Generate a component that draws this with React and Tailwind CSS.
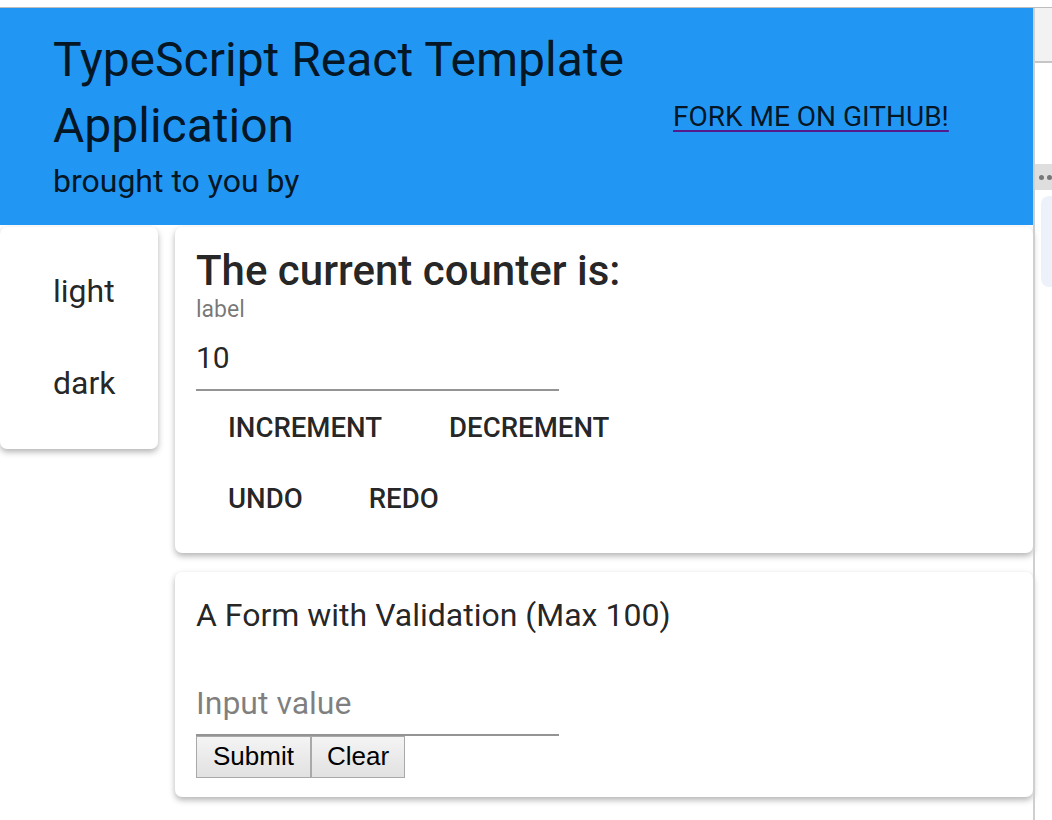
import React from "react";

export default function App() {
  const font = { fontFamily: "Roboto, 'Noto Sans', sans-serif" };
  const native = { fontFamily: "'Liberation Sans', Arial, sans-serif" };
  return (
    <div className="w-[1052px] h-[820px] overflow-hidden bg-white flex flex-col" style={font}>
      <div className="h-[7px] bg-white shrink-0" />
      <div className="h-px bg-[#bdbdbd] shrink-0" />
      <div className="flex flex-1 min-h-0">
        <div className="w-[1034px] flex flex-col">
          <header className="h-[217px] bg-[#2196f3] flex items-start text-[rgba(0,0,0,0.87)] relative z-10">
            <div className="w-[640px] shrink-0 pl-[53px] pt-[19px]">
              <h1 className="text-[48px] leading-[66px] font-normal">TypeScript React Template Application</h1>
              <p className="text-[32px] leading-[40px] mt-[2px]">brought to you by</p>
            </div>
            <div className="pl-[33px] pt-[91px]">
              <a href="#" className="text-[28px] leading-[36px] underline decoration-[#551a8b] decoration-2 underline-offset-[4px] text-[rgba(0,0,0,0.87)]">FORK ME ON GITHUB!</a>
            </div>
          </header>
          <div className="flex items-start gap-[17px] pt-[2px]">
            <nav className="w-[158px] h-[222px] shrink-0 bg-white rounded-[7px] shadow-[0_3px_6px_rgba(0,0,0,0.3)] pl-[53px] pt-[46px] text-[32px] text-[rgba(0,0,0,0.87)]">
              <div className="leading-[36px]">light</div>
              <div className="leading-[36px] mt-[56px]">dark</div>
            </nav>
            <div className="flex-1 flex flex-col gap-[19px]">
              <section className="h-[326px] bg-white rounded-[7px] shadow-[0_3px_6px_rgba(0,0,0,0.3)] pl-[21px] pt-[20px] text-[rgba(0,0,0,0.87)]">
                <h2 className="text-[42px] leading-[48px] font-medium">The current counter is:</h2>
                <div className="text-[23px] leading-[24px] text-[rgba(0,0,0,0.54)] mt-[3px]">label</div>
                <div className="w-[363px] text-[30px] leading-[36px] mt-[18px] pb-[13px] border-b-2 border-[#949494]">10</div>
                <div className="flex mt-[10px]">
                  <button className="px-[32px] h-[54px] leading-[54px] text-[27.6px] font-medium uppercase">Increment</button>
                  <button className="px-[32px] h-[54px] leading-[54px] text-[27.6px] font-medium uppercase ml-[3px]">Decrement</button>
                </div>
                <div className="flex mt-[17px]">
                  <button className="px-[32px] h-[54px] leading-[54px] text-[27.6px] font-medium uppercase">Undo</button>
                  <button className="px-[32px] h-[54px] leading-[54px] text-[27.6px] font-medium uppercase ml-[2px]">Redo</button>
                </div>
              </section>
              <section className="h-[225px] bg-white rounded-[7px] shadow-[0_3px_6px_rgba(0,0,0,0.3)] pl-[21px] pt-[23px] text-[rgba(0,0,0,0.87)]">
                <h3 className="text-[32px] leading-[40px] font-normal">A Form with Validation (Max 100)</h3>
                <div className="w-[363px] mt-[48px] text-[32px] leading-[40px] text-[rgba(0,0,0,0.5)] pb-[11px] border-b-2 border-[#949494]">Input value</div>
                <div className="flex">
                  <button className="h-[42px] pb-[3px] px-[16px] text-[26px] border border-[#a9a9a9] bg-gradient-to-b from-[#f4f4f4] to-[#e1e1e1] text-black" style={native}>Submit</button>
                  <button className="h-[42px] pb-[3px] px-[15px] text-[26px] border border-[#a9a9a9] bg-gradient-to-b from-[#f4f4f4] to-[#e1e1e1] text-black" style={native}>Clear</button>
                </div>
              </section>
            </div>
          </div>
        </div>
        <div className="w-[2px] bg-[#cfcfcf]" />
        <div className="flex-1 flex flex-col">
          <div className="h-[53px] bg-[#f2f2f2]" />
          <div className="h-[2px] bg-[#c6c6c6]" />
          <div className="h-[101px] bg-white" />
          <div className="h-[26px] bg-[#dedede] flex items-center gap-[3px] pl-[4px]">
            <span className="w-[5px] h-[5px] rounded-full bg-[#777]" />
            <span className="w-[5px] h-[5px] rounded-full bg-[#777]" />
          </div>
          <div className="pl-[6px] pt-[6px]">
            <div className="h-[91px] bg-[#edf2fa] rounded-l-[8px]" />
          </div>
        </div>
      </div>
    </div>
  );
}
